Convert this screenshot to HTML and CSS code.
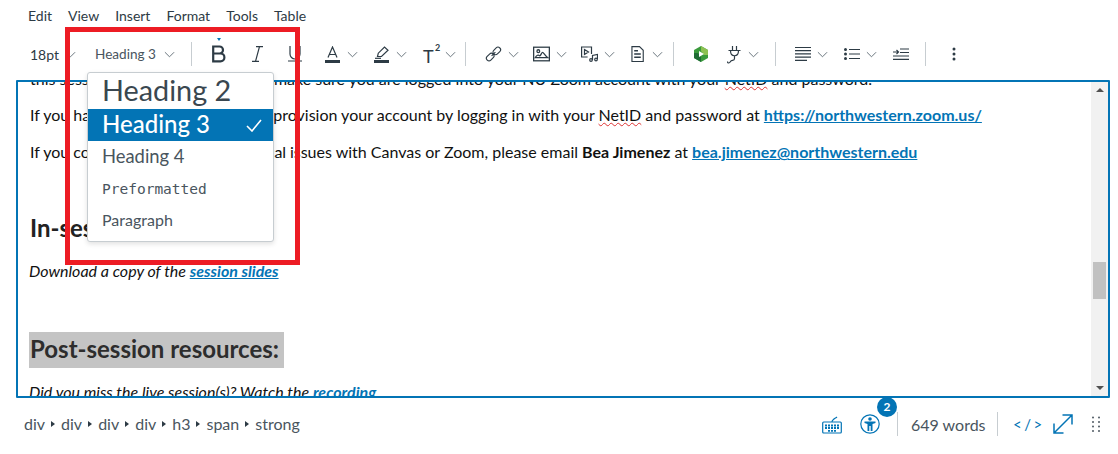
FILE: index.html
```html
<!DOCTYPE html>
<html lang="en">
<head>
<meta charset="utf-8">
<title>Editor</title>
<link rel="stylesheet" href="styles.css">
</head>
<body>
<div class="app">
  <nav class="menubar">
    <span>Edit</span><span>View</span><span>Insert</span><span>Format</span><span>Tools</span><span>Table</span>
  </nav>
  <div class="toolbar">
    <div class="tb-item tb-size">18pt<svg class="chev" viewBox="0 0 12 7"><path d="M1 1l5 5 5-5"/></svg></div>
    <div class="tb-item tb-style">Heading 3<svg class="chev" viewBox="0 0 12 7"><path d="M1 1l5 5 5-5"/></svg></div>
    <i class="sep"></i>
    <div class="tb-icons tb-fmt">
      <svg class="ic ic-b" viewBox="0 0 14 25"><path class="dot" d="M5 0h4L7 3z"/><path class="bold" d="M1.200 8.500h6.300a3.500 3.500 0 0 1 0 7H1.200zM1.200 15.500h7.300a3.900 3.900 0 0 1 0 7.800H1.200z"/></svg>
      <svg class="ic ic-i" viewBox="0 0 11 16"><path d="M4 .6h7M0 15.400h7M7.500 .6L3.500 15.400"/></svg>
      <svg class="ic ic-u" viewBox="0 0 14 16"><path d="M2 0v8a5 5 0 0 0 10 0V0M0 15h14"/></svg>
      <div class="split sp-a"><svg class="ic ic-a" viewBox="0 0 15 17"><path d="M3 11.500L7.500 1 12 11.500M4.300 8.500h6.400"/><rect class="fill" x="0" y="14" width="15" height="3"/></svg><svg class="chev" viewBox="0 0 12 7"><path d="M1 1l5 5 5-5"/></svg></div>
      <div class="split sp-b"><svg class="ic ic-a" viewBox="0 0 15 17"><path d="M3.500 10.500l.8-3.300L10.500 1 14 4.200 7.500 10.500z"/><path d="M1 12.300h6"/><rect class="fill" x="0" y="14" width="15" height="3"/></svg><svg class="chev" viewBox="0 0 12 7"><path d="M1 1l5 5 5-5"/></svg></div>
      <div class="split sp-c"><span class="sup">T<b>2</b></span><svg class="chev" viewBox="0 0 12 7"><path d="M1 1l5 5 5-5"/></svg></div>
    </div>
    <i class="sep"></i>
    <div class="tb-icons tb-media">
      <div class="split"><svg class="ic" viewBox="0 0 17 17"><rect x="7.500" y="2.500" width="9" height="5.500" rx="2.700" transform="rotate(-45 12 5.250)"/><rect x=".5" y="9" width="9" height="5.500" rx="2.700" transform="rotate(-45 5 11.750)"/><path d="M6.500 10.500l4-4"/></svg><svg class="chev" viewBox="0 0 12 7"><path d="M1 1l5 5 5-5"/></svg></div>
      <div class="split"><svg class="ic" viewBox="0 0 16 14"><rect x=".6" y=".6" width="14.800" height="12.800"/><circle cx="5" cy="4.300" r="1.300"/><path d="M2 10.500c1.500-2.500 3-3 4-2s2-3 3-3 2 3 5 5z"/></svg><svg class="chev" viewBox="0 0 12 7"><path d="M1 1l5 5 5-5"/></svg></div>
      <div class="split"><svg class="ic" viewBox="0 0 17 16"><path d="M10.500 8V1H.6v10h6M3.500 3.500l4 2.500-4 2.500z"/><path d="M11.500 14V9.500l5-1V13"/><circle cx="10" cy="14" r="1.300"/><circle cx="15" cy="13.500" r="1.300"/></svg><svg class="chev" viewBox="0 0 12 7"><path d="M1 1l5 5 5-5"/></svg></div>
      <div class="split"><svg class="ic" viewBox="0 0 17 17"><path d="M2.600 .6h8l4 4v12h-12z"/><path class="thick" d="M5 5h4M5 8.500h7M5 12h7"/></svg><svg class="chev" viewBox="0 0 12 7"><path d="M1 1l5 5 5-5"/></svg></div>
    </div>
    <i class="sep"></i>
    <div class="tb-icons tb-plug">
      <svg class="logo" viewBox="0 0 16 16"><path class="g1" d="M8 0l7 4v8l-7 4-7-4V4z"/><path class="g2" d="M8 0l7 4v5h-4L8 5z"/><path class="g3" d="M1 7h4l3 4v5l-7-4z"/><path class="w" d="M6 5l5 3-5 3z"/></svg>
      <div class="split"><svg class="ic ic-p" viewBox="0 0 15 19"><path d="M1.500 5.500h12M3.500 5.500c0 7 8 7 8 0M5.500 1v4.500M9.500 1v4.500M7.500 10.500v3c0 3-3 1-4 3s-3 2-3 0"/></svg><svg class="chev" viewBox="0 0 12 7"><path d="M1 1l5 5 5-5"/></svg></div>
    </div>
    <i class="sep"></i>
    <div class="tb-icons tb-list">
      <div class="split"><svg class="ic" viewBox="0 0 16 15"><path d="M0 1h16M0 4.200h16M0 7.400h16M0 10.600h16M0 13.800h12"/></svg><svg class="chev" viewBox="0 0 12 7"><path d="M1 1l5 5 5-5"/></svg></div>
      <div class="split"><svg class="ic" viewBox="0 0 16 12"><path d="M5 1.500h11M5 6h11M5 10.500h11"/><circle class="fill" cx="1.500" cy="1.500" r="1.500"/><circle class="fill" cx="1.500" cy="6" r="1.500"/><circle class="fill" cx="1.500" cy="10.500" r="1.500"/></svg><svg class="chev" viewBox="0 0 12 7"><path d="M1 1l5 5 5-5"/></svg></div>
      <svg class="ic" viewBox="0 0 16 12"><path d="M7 1h9M7 4.500h9M0 8h16M0 11.300h16M0 4h5M3.500 2l2 2-2 2"/></svg>
    </div>
    <i class="sep"></i>
    <svg class="more" viewBox="0 0 4 14"><circle cx="2" cy="2" r="1.500"/><circle cx="2" cy="7" r="1.500"/><circle cx="2" cy="12" r="1.500"/></svg>
  </div>

  <div class="editor">
    <div class="content">
      <p class="first">this sess<span class="wide">ion, you will first need to </span>make sure you are logged into your NU Zoom account with your <span class="sp">NetID</span> and password.</p>
      <p>If you ha<span class="tight">ve not yet done so, please </span>provision your account by logging in with your <span class="sp">NetID</span> and password at <a href="#"><strong>https://northwestern.zoom.us/</strong></a></p>
      <p>If you co<span class="tight">me across any new technical </span>issues with Canvas or Zoom, please email <strong>Bea Jimenez</strong> at <a href="#"><strong>bea.jimenez@northwestern.edu</strong></a></p>
      <h3 class="h-in">In-session resources:</h3>
      <p class="note"><em>Download a copy of the <a href="#"><strong>session slides</strong></a></em></p>
      <h3 class="h-post"><mark>Post-session resources:</mark></h3>
      <p class="note2"><em>Did you miss the live session(s)? Watch the <a href="#"><strong>recording</strong></a></em></p>
    </div>
    <div class="scrollbar">
      <span class="arrow up"></span>
      <span class="track"><span class="thumb"></span></span>
      <span class="arrow down"></span>
    </div>
  </div>

  <footer class="status">
    <div class="crumbs">
      <span>div</span><i></i><span>div</span><i></i><span>div</span><i></i><span>div</span><i></i><span>h3</span><i></i><span>span</span><i></i><span>strong</span>
    </div>
    <div class="st-right">
      <svg class="st-ic kb" viewBox="0 0 20 18"><path d="M10 6c0-2 1-2 2-3s2-1 3-2"/><rect x=".7" y="6" width="18.600" height="11" rx="1"/><path class="keys" d="M3 9.500h14M3 12h14M6 14.800h8"/></svg>
      <span class="a11y">
        <svg class="st-ic ac" viewBox="0 0 20 20"><circle cx="10" cy="10" r="9.200"/><circle class="fill" cx="10" cy="5" r="1.800"/><path class="fill" d="M4.500 7.500h11v1.500L12.500 10v7h-1.800v-5h-1.400v5H7.500v-7L4.500 9z"/></svg>
        <b class="badge">2</b>
      </span>
      <i class="st-sep sep1"></i>
      <span class="words">649 words</span>
      <i class="st-sep sep2"></i>
      <span class="code">&lt;/&gt;</span>
      <svg class="st-ic exp" viewBox="0 0 20 20"><path d="M1 19L19 1M9.500 1H19v9.500M1 9.500V19h9.500"/></svg>
      <svg class="grip" viewBox="0 0 8 16"><g><circle cx="1" cy="1.500" r="1"/><circle cx="7" cy="1.500" r="1"/><circle cx="1" cy="6" r="1"/><circle cx="7" cy="6" r="1"/><circle cx="1" cy="10.500" r="1"/><circle cx="7" cy="10.500" r="1"/><circle cx="1" cy="15" r="1"/><circle cx="7" cy="15" r="1"/></g></svg>
    </div>
  </footer>

  <ul class="dropdown">
    <li class="d2">Heading 2</li>
    <li class="d3">Heading 3<svg class="check" viewBox="0 0 16 13"><path d="M1 7l5 5L15 1"/></svg></li>
    <li class="d4">Heading 4</li>
    <li class="dp">Preformatted</li>
    <li class="dq">Paragraph</li>
  </ul>
  <div class="redbox"></div>
</div>
</body>
</html>
```
FILE: styles.css
```css
* { box-sizing: border-box; }
html, body { margin: 0; padding: 0; }
body { background: #fff; font-family: Lato, "Open Sans", sans-serif; color: #2d3b45; overflow: hidden; }
.app { position: relative; width: 1118px; height: 454px; overflow: hidden; }

.menubar { height: 31px; display: flex; gap: 16px; padding: 7px 0 0 28px; font-size: 14px; line-height: 18px; color: #2d3b45; }

.toolbar { height: 49px; display: flex; align-items: center; padding-left: 30px; padding-bottom: 3px; }
.tb-item { display: flex; align-items: center; white-space: nowrap; }
.tb-size { width: 65px; font-size: 14px; gap: 6px; }
.tb-style { width: 96px; font-size: 13.600px; gap: 8px; color: #49555e; }
.chev { width: 11px; height: 7px; fill: none; stroke: #5d6a73; stroke-width: 1; flex: none; }
.sep { width: 1px; height: 24px; background: #c7cdd1; flex: none; }
.tb-icons, .split { display: flex; align-items: center; }
.split { gap: 6px; }
.ic { fill: none; stroke: #2d3b45; stroke-width: 1.200; flex: none; width: 17px; height: 16px; }
.ic .fill { fill: #2d3b45; stroke: none; }

.tb-fmt { width: 273px; padding-left: 20px; }
.ic-b { width: 14px; height: 25px; margin-top: -8px; stroke: none; }
.ic-b .dot { fill: #0374b5; }
.ic-b .bold { fill: none; stroke: #2d3b45; stroke-width: 2.200; }
.ic-i { margin-left: 26px; width: 11px; height: 16px; }
.ic-u { margin-left: 25px; width: 14px; height: 16px; }
.ic-a { width: 15px; height: 17px; }
.sp-a { margin-left: 23px; }
.sp-a, .sp-b { gap: 7px; }
.sp-b, .sp-c { margin-left: 16px; }
.sup { font-size: 18px; line-height: 20px; position: relative; width: 16px; margin-top: 3px; }
.sup b { font-size: 9px; line-height: 10px; position: absolute; left: 12px; top: -3px; font-weight: 700; }

.tb-media { width: 207px; padding-left: 19px; gap: 14px; }
.thick { stroke-width: 1.600; }

.tb-plug { width: 101px; padding-left: 19px; gap: 18px; }
.logo { width: 16px; height: 16px; flex: none; }
.g1 { fill: #3a9a3c; }
.g2 { fill: #8cc152; }
.g3 { fill: #1e6b34; }
.w { fill: #fff; }
.ic-p { width: 15px; height: 19px; }

.tb-list { width: 149px; padding-left: 19px; gap: 16px; }
.tb-list .ic { width: 16px; }
.more { width: 4px; height: 14px; margin-left: 26px; fill: #2d3b45; }

.editor { position: relative; margin-left: 16px; width: 1094px; height: 318px; border: 2px solid #0374b5; border-radius: 1px; overflow: hidden; display: flex; }
.content { flex: 1; padding: 0 0 0 12px; font-size: 16px; line-height: 20px; color: #111; overflow: hidden; min-width: 0; }
.content p { margin: 0; white-space: nowrap; }
.content .first { margin-top: -13px; }
.content p + p { margin-top: 17px; }
.content .first + p { margin-top: 16px; }
.tight { letter-spacing: -.11px; }
.wide { letter-spacing: .3px; }
.content a { color: #0374b5; text-decoration: underline; }
.sp { text-decoration: underline wavy #d33; text-decoration-thickness: 1px; text-underline-offset: 1px; }
.content h3 { margin: 0; font-size: 24px; font-weight: 700; color: #222; white-space: nowrap; }
.h-in { margin-top: 50px !important; line-height: 32px; }
.content .note { margin-top: 17px; margin-left: -1px; }
.h-post { margin-top: 51px !important; line-height: 34px; }
.h-post mark { background: #c4c4c4; color: #2d2d2d; display: inline-block; padding: 0 5px 0 1px; height: 36px; margin-left: -1px; }
.content .note2 { margin-top: 14px; margin-left: -1px; }

.scrollbar { width: 17px; flex: none; background: #f1f1f1; display: flex; flex-direction: column; align-items: center; }
.arrow { width: 0; height: 0; border-left: 4px solid transparent; border-right: 4px solid transparent; flex: none; }
.arrow.up { border-bottom: 4px solid #505050; margin: 6px 0 0; }
.arrow.down { border-top: 4px solid #505050; margin: 0 0 6px; }
.track { flex: 1; width: 100%; padding: 0 2px; display: block; }
.thumb { display: block; height: 37px; margin-top: 170px; background: #c1c1c1; }

.status { height: 54px; display: flex; justify-content: space-between; padding: 0 0 0 24px; }
.crumbs { display: flex; align-items: center; height: 50px; gap: 6px; font-size: 16px; color: #49555e; }
.crumbs i { width: 0; height: 0; border-left: 4px solid #2d3b45; border-top: 3px solid transparent; border-bottom: 3px solid transparent; margin-top: 2px; }
.st-right { display: flex; align-items: center; height: 52px; }
.st-ic { fill: none; stroke: #0374b5; stroke-width: 1.200; flex: none; }
.st-ic .fill { fill: #0374b5; stroke: none; }
.kb { width: 20px; height: 18px; margin-top: 1px; }
.kb .keys { stroke-width: 1.800; stroke-dasharray: 2 1; }
.a11y { position: relative; width: 20px; height: 20px; margin-left: 18px; display: block; }
.ac { width: 20px; height: 20px; display: block; }
.badge { position: absolute; left: 17px; top: -17px; width: 20px; height: 20px; border-radius: 50%; background: #0374b5; color: #fff; font-size: 12px; line-height: 20px; text-align: center; font-weight: 700; }
.st-sep { width: 1px; height: 24px; background: #c7cdd1; flex: none; }
.sep1 { margin-left: 17px; }
.words { font-size: 16px; margin-left: 13px; color: #49555e; width: 74px; white-space: nowrap; }
.sep2 { margin-left: 12px; }
.code { color: #0374b5; font-size: 15px; letter-spacing: 2.500px; margin-left: 15px; width: 25px; white-space: nowrap; }
.exp { width: 20px; height: 20px; margin-left: 15px; stroke-width: 1.500; }
.grip { width: 8px; height: 16px; margin-left: 19px; margin-right: 18px; fill: #4f5a63; }

.dropdown { position: absolute; left: 87px; top: 72px; width: 187px; height: 170px; margin: 0; padding: 0; list-style: none; background: #fff; border: 1px solid #c7cdd1; border-radius: 3px; box-shadow: 0 2px 5px rgba(0,0,0,.12); color: #49555e; overflow: hidden; }
.dropdown li { padding-left: 14px; display: flex; align-items: center; white-space: nowrap; }
.d2 { height: 36px; font-size: 28.800px; color: #3a4750; padding-bottom: 2px; }
.d3 { height: 32px; font-size: 24px; background: #0374b5; color: #fff; font-weight: 500; justify-content: space-between; padding-right: 11px; padding-bottom: 4px; }
.d4 { height: 32px; font-size: 18.400px; padding-bottom: 2px; }
.dp { height: 32px; font-size: 14.500px; font-family: "DejaVu Sans Mono", "Liberation Mono", monospace; }
.dq { height: 32px; font-size: 16px; padding-bottom: 4px; }
.check { width: 16px; height: 13px; fill: none; stroke: #fff; stroke-width: 1.600; margin-top: 4px; }

.redbox { position: absolute; left: 65px; top: 27px; width: 235px; height: 238px; border: 5px solid #ed1c24; pointer-events: none; }
```
